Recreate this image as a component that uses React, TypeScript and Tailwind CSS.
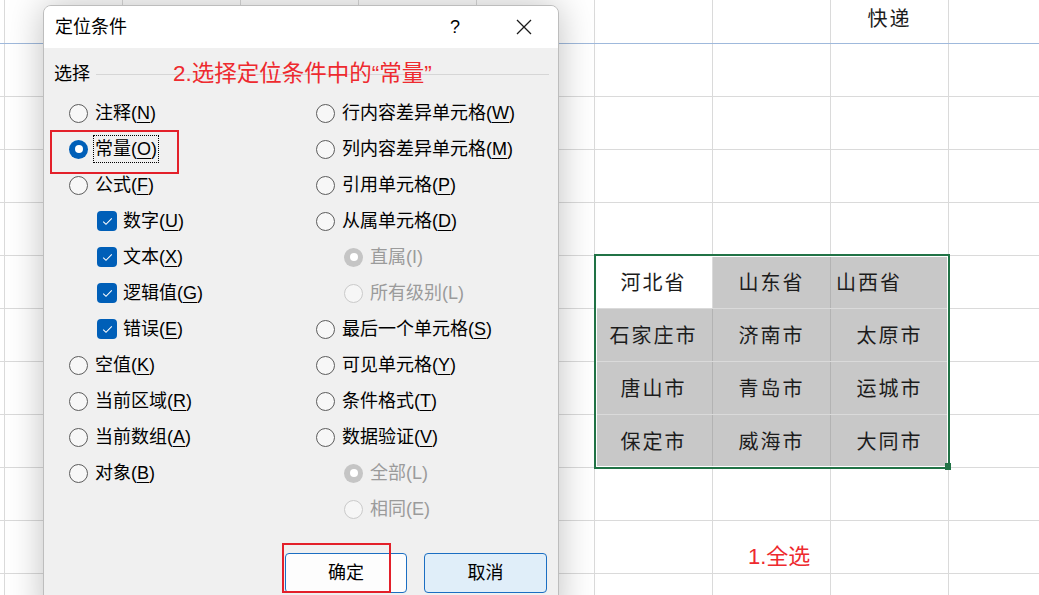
import { Fragment } from 'react';

type Opt = {
  label: string;
  key?: string;
  kind: 'radio' | 'check';
  checked?: boolean;
  disabled?: boolean;
  sub?: boolean;
  focus?: boolean;
};

const leftOpts: Opt[] = [
  { label: '注释', key: 'N', kind: 'radio' },
  { label: '常量', key: 'O', kind: 'radio', checked: true, focus: true },
  { label: '公式', key: 'F', kind: 'radio' },
  { label: '数字', key: 'U', kind: 'check', checked: true, sub: true },
  { label: '文本', key: 'X', kind: 'check', checked: true, sub: true },
  { label: '逻辑值', key: 'G', kind: 'check', checked: true, sub: true },
  { label: '错误', key: 'E', kind: 'check', checked: true, sub: true },
  { label: '空值', key: 'K', kind: 'radio' },
  { label: '当前区域', key: 'R', kind: 'radio' },
  { label: '当前数组', key: 'A', kind: 'radio' },
  { label: '对象', key: 'B', kind: 'radio' },
];

const rightOpts: Opt[] = [
  { label: '行内容差异单元格', key: 'W', kind: 'radio' },
  { label: '列内容差异单元格', key: 'M', kind: 'radio' },
  { label: '引用单元格', key: 'P', kind: 'radio' },
  { label: '从属单元格', key: 'D', kind: 'radio' },
  { label: '直属(I)', kind: 'radio', checked: true, disabled: true, sub: true },
  { label: '所有级别(L)', kind: 'radio', disabled: true, sub: true },
  { label: '最后一个单元格', key: 'S', kind: 'radio' },
  { label: '可见单元格', key: 'Y', kind: 'radio' },
  { label: '条件格式', key: 'T', kind: 'radio' },
  { label: '数据验证', key: 'V', kind: 'radio' },
  { label: '全部(L)', kind: 'radio', checked: true, disabled: true, sub: true },
  { label: '相同(E)', kind: 'radio', disabled: true, sub: true },
];

// sheet cells: row index -> col index -> text
const cells: Record<string, string> = {
  '0-7': '快递',
  '5-5': '河北省',
  '5-6': '山东省',
  '5-7': '山西省',
  '6-5': '石家庄市',
  '6-6': '济南市',
  '6-7': '太原市',
  '7-5': '唐山市',
  '7-6': '青岛市',
  '7-7': '运城市',
  '8-5': '保定市',
  '8-6': '威海市',
  '8-7': '大同市',
};

function Radio({ checked, disabled }: { checked?: boolean; disabled?: boolean }) {
  if (checked && !disabled) {
    return (
      <span className="flex h-[19px] w-[19px] shrink-0 items-center justify-center rounded-full bg-[#005fb8]">
        <span className="h-[8px] w-[8px] rounded-full bg-white" />
      </span>
    );
  }
  if (checked && disabled) {
    return (
      <span className="flex h-[19px] w-[19px] shrink-0 items-center justify-center rounded-full bg-[#c5c5c5]">
        <span className="h-[8px] w-[8px] rounded-full bg-white" />
      </span>
    );
  }
  return (
    <span
      className={
        disabled
          ? 'h-[19px] w-[19px] shrink-0 rounded-full border border-[#cacaca] bg-[#f6f6f6]'
          : 'h-[19px] w-[19px] shrink-0 rounded-full border border-[#5c5c5c] bg-[#f7f7f7]'
      }
    />
  );
}

function Check() {
  return (
    <span className="flex h-[20px] w-[20px] shrink-0 items-center justify-center rounded-[4px] bg-[#005fb8]">
      <svg width="11" height="9" viewBox="0 0 11 9" fill="none">
        <path d="M1.2 4.6 L4 7.3 L9.8 1.4" stroke="white" strokeWidth="1.1" />
      </svg>
    </span>
  );
}

function OptionRow({ o }: { o: Opt }) {
  const text = o.key ? (
    <>
      {o.label}(<span className="underline underline-offset-[3px]">{o.key}</span>)
    </>
  ) : (
    o.label
  );
  return (
    <div className={`flex h-[36px] items-center ${o.sub ? 'pl-[28px]' : ''}`}>
      {o.kind === 'radio' ? <Radio checked={o.checked} disabled={o.disabled} /> : <Check />}
      <span
        className={`${o.kind === 'check' ? 'ml-[6px]' : 'ml-[7px]'} leading-[24px] ${
          o.disabled ? 'text-[#9b9b9b]' : 'text-black'
        } ${o.focus ? 'outline-1 outline-offset-[1px] outline-dotted outline-black' : ''}`}
      >
        {text}
      </span>
    </div>
  );
}

function Sheet() {
  const rows = Array.from({ length: 12 }, (_, i) => i);
  const cols = Array.from({ length: 9 }, (_, i) => i);
  return (
    <div className="flex flex-col font-['Noto_Sans_CJK_SC',sans-serif] text-[20px] text-[#1c1c1c]">
      {rows.map((r) => (
        <div
          key={r}
          className={`flex shrink-0 ${r === 0 ? 'h-[44px] border-b border-[#9fb9dc]' : 'h-[53px] border-b border-[#dadada]'}`}
        >
          <div className="w-[5px] shrink-0 border-r border-[#dadada]" />
          {cols.map((c) => {
            const sel = r >= 5 && r <= 8 && c >= 5 && c <= 7;
            const gray = sel && !(r === 5 && c === 5);
            const t = cells[`${r}-${c}`];
            return (
              <div
                key={c}
                className={`flex w-[118px] shrink-0 border-r tracking-[2px] ${
                  gray ? 'border-[#b3b3b3] bg-[#c8c8c8]' : 'border-[#dadada] bg-white'
                } ${r === 0 ? 'items-start justify-center pt-[3px]' : r === 5 && c === 7 ? 'items-center justify-start pl-[5px]' : 'items-center justify-center'}`}
              >
                {t}
              </div>
            );
          })}
        </div>
      ))}
    </div>
  );
}

export default function App() {
  return (
    <div className="relative h-[595px] w-[1039px] overflow-hidden bg-white">
      <Sheet />

      {/* selection border */}
      <div className="absolute left-[594px] top-[254px] h-[215px] w-[356px] border-2 border-[#217346] shadow-[inset_0_0_0_1px_white]" />
      <div className="absolute left-[945px] top-[463px] h-[7px] w-[6px] bg-[#217346]" />

      {/* annotation on sheet */}
      <div className="absolute left-[748px] top-[542px] font-['Liberation_Sans','Noto_Sans_CJK_SC',sans-serif] text-[22px] leading-[30px] text-[#ee2a2f]">
        1.全选
      </div>

      {/* dialog */}
      <div className="absolute left-[43px] top-[5px] flex h-[620px] w-[516px] flex-col overflow-hidden rounded-t-[8px] border border-[#bdbdbd] bg-[#f0f0f0] font-['Liberation_Sans','Noto_Sans_CJK_SC',sans-serif] text-[18px] text-black shadow-[0_0_36px_rgba(0,0,0,0.25)]">
        <div className="flex h-[42px] shrink-0 items-center bg-white pl-[11px]">
          <span className="text-[18px]">定位条件</span>
          <div className="ml-auto flex h-full items-center pr-[11px]">
            <span className="flex h-full w-[46px] items-center justify-center text-[18px]">?</span>
            <span className="ml-[23px] flex h-full w-[46px] items-center justify-center">
              <svg width="16" height="16" viewBox="0 0 16 16">
                <path d="M1 1 L15 15 M15 1 L1 15" stroke="#1a1a1a" strokeWidth="1.3" />
              </svg>
            </span>
          </div>
        </div>

        <div className="flex flex-col pt-[14px]">
          <div className="flex h-[24px] items-center pl-[10px]">
            <span>选择</span>
            <span className="ml-[6px] mr-[9px] h-px flex-1 bg-[#d6d6d6]" />
          </div>

          <div className="mt-[9px] flex pl-[25px]">
            <div className="w-[247px]">
              {leftOpts.map((o) => (
                <OptionRow key={o.label} o={o} />
              ))}
            </div>
            <div>
              {rightOpts.map((o) => (
                <Fragment key={o.label}>
                  <OptionRow o={o} />
                </Fragment>
              ))}
            </div>
          </div>

          <div className="mt-[26px] flex justify-end gap-[17px] pr-[11px]">
            <button
              type="button"
              className="h-[40px] w-[122px] rounded-[4px] border border-[#1b6ec2] bg-[#fdfdfd] text-[18px]"
            >
              确定
            </button>
            <button
              type="button"
              className="h-[40px] w-[123px] rounded-[4px] border border-[#1b6ec2] bg-[#e0eef9] text-[18px]"
            >
              取消
            </button>
          </div>
        </div>
      </div>

      {/* dialog annotations */}
      <div className="absolute left-[173px] top-[59px] font-['Liberation_Sans','Noto_Sans_CJK_SC',sans-serif] text-[22.5px] leading-[30px] text-[#ee2a2f]">
        2.选择定位条件中的“常量”
      </div>
      <div className="absolute left-[50px] top-[130px] h-[44px] w-[129px] border-2 border-[#e3202a]" />
      <div className="absolute left-[282px] top-[543px] h-[50px] w-[109px] border-2 border-[#e3202a]" />
    </div>
  );
}
